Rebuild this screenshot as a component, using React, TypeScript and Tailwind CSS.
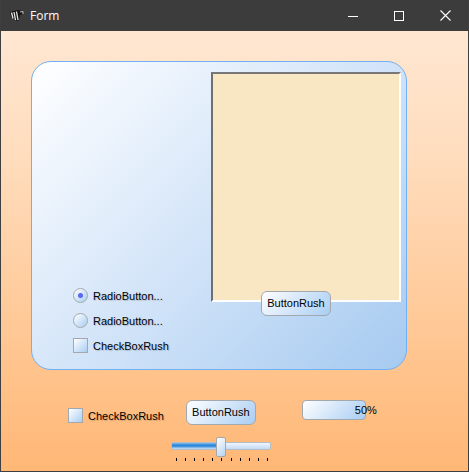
const labelCls =
  "font-['Liberation_Sans',Arial,sans-serif] text-[11px] leading-[14px] text-black [text-shadow:1px_1px_1px_rgba(0,0,0,0.18)]";

const glossCls = "bg-[linear-gradient(135deg,#ffffff_0%,#a9cdf3_100%)]";

function Radio({ checked, className }: { checked?: boolean; className?: string }) {
  return (
    <div className={"flex items-center gap-[5px] " + (className ?? "")}>
      <span className={"flex h-[15px] w-[15px] items-center justify-center rounded-full border border-[#a3a8ae] " + glossCls}>
        {checked && <span className="h-[5px] w-[5px] rounded-full bg-[#5a68ee]" />}
      </span>
      <span className={labelCls}>RadioButton...</span>
    </div>
  );
}

function Check({ className }: { className?: string }) {
  return (
    <div className={"flex items-center gap-[5px] " + (className ?? "")}>
      <span className={"h-[15px] w-[15px] border border-[#a3a8ae] " + glossCls} />
      <span className={labelCls}>CheckBoxRush</span>
    </div>
  );
}

function RushButton({ className }: { className?: string }) {
  return (
    <button
      className={
        "flex h-[25px] w-[70px] items-center justify-center rounded-[6px] border border-[#a3a8ae] text-[11px] text-black font-['Liberation_Sans',Arial,sans-serif] " +
        glossCls +
        " " +
        (className ?? "")
      }
    >
      ButtonRush
    </button>
  );
}

function WindowIcon() {
  return (
    <svg width="15" height="13" viewBox="0 0 15 13" className="shrink-0">
      <path d="M1 3 L9 1 L14 2 L14 5 L11 6 L10 11 L8 12 L2 8 Z" fill="#141414" />
      <path d="M2.5 3.5 L4 9.5 M5 3 L6.5 11 M7.5 2.5 L9 11" stroke="#e4e4e4" strokeWidth="1.3" fill="none" />
      <path d="M11 3 L14 2.5 L14 5" stroke="#c4c4c4" strokeWidth="1" fill="none" />
    </svg>
  );
}

function TitleBar() {
  return (
    <div className="flex h-[31px] shrink-0 items-center bg-[#3c3c3c] text-white">
      <div className="ml-[8px] flex items-center gap-[6px]">
        <WindowIcon />
        <span className="font-['Open_Sans',sans-serif] text-[12px] leading-none">Form</span>
      </div>
      <div className="ml-auto flex h-full items-center">
        <svg width="10" height="10" viewBox="0 0 10 10" className="mr-[36px]">
          <path d="M0 5.5 H10" stroke="#fff" strokeWidth="1" />
        </svg>
        <svg width="10" height="10" viewBox="0 0 10 10" className="mr-[36px]">
          <rect x="0.5" y="0.5" width="9" height="9" stroke="#fff" strokeWidth="1" fill="none" />
        </svg>
        <svg width="11" height="11" viewBox="0 0 11 11" className="mr-[17px]">
          <path d="M0.5 0.5 L10.5 10.5 M10.5 0.5 L0.5 10.5" stroke="#fff" strokeWidth="1.1" />
        </svg>
      </div>
    </div>
  );
}

function Slider() {
  return (
    <div className="ml-[170px] mt-[12px] w-[100px]">
      <div className="relative h-[20px]">
        <div className="absolute left-0 top-[5px] flex h-[8px] w-[100px] overflow-hidden rounded-[2px] border border-[#b4bcc6]">
          <div className="h-full w-[45px] bg-[linear-gradient(180deg,#7fb6e8_0%,#1f7fd8_45%,#cfe3f8_100%)]" />
          <div className="h-full flex-1 bg-[linear-gradient(180deg,#eef5fd_0%,#c3daf4_100%)]" />
        </div>
        <div className="absolute left-[45px] top-0 h-[20px] w-[10px] rounded-[2px] border border-[#a3a8ae] bg-[linear-gradient(135deg,#ffffff_0%,#b6d3f3_100%)]" />
      </div>
      <div className="ml-[5px] mt-[1px] flex w-[92px] justify-between">
        {Array.from({ length: 11 }).map((_, i) => (
          <span key={i} className="h-[3px] w-px bg-black" />
        ))}
      </div>
    </div>
  );
}

export default function App() {
  return (
    <div className="flex h-[472px] w-[469px] flex-col overflow-hidden border-x border-b border-[#3f3f3f]">
      <TitleBar />
      <div className="flex-1 bg-[linear-gradient(180deg,#ffe7d2_0%,#ffdcbc_30%,#ffb775_100%)]">
        <div className="relative ml-[30px] mt-[30px] flex h-[309px] w-[376px] rounded-[20px] border border-[#6fb0f6] bg-[linear-gradient(135deg,#ffffff_0%,#cfe2f8_55%,#a6caf0_100%)]">
          <div className="flex w-[179px] flex-col pl-[41px] pt-[226px]">
            <Radio checked />
            <Radio className="mt-[10px]" />
            <Check className="mt-[10px]" />
          </div>
          <div className="mt-[10px] h-[230px] w-[190px] border-2 border-b-white border-l-[#6f6f6f] border-r-white border-t-[#777777] bg-[#f9e7c3]" />
          <RushButton className="absolute left-[229px] top-[229px]" />
        </div>
        <div className="mt-[30px] flex items-start">
          <Check className="ml-[67px] mt-[8px]" />
          <RushButton className="ml-[22px]" />
          <div className={"relative ml-[46px] h-[20px] w-[64px] rounded-[4px] border border-[#a3a8ae] " + glossCls}>
            <span className="absolute left-[52px] top-[2px] text-[11px] leading-[14px] text-black font-['Liberation_Sans',Arial,sans-serif]">
              50%
            </span>
          </div>
        </div>
        <Slider />
      </div>
    </div>
  );
}
